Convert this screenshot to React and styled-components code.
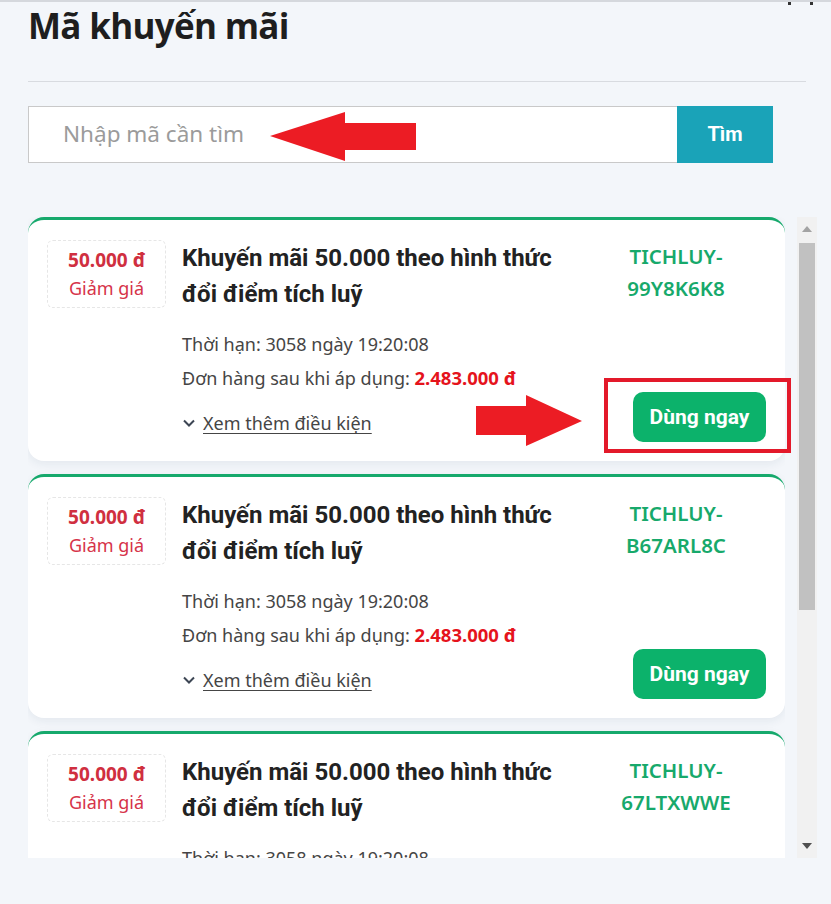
import React from "react";
import styled, { createGlobalStyle } from "styled-components";

const GlobalStyle = createGlobalStyle`
  html, body {
    margin: 0;
    padding: 0;
    background: #f3f6fa;
    font-family: "Noto Sans", "Open Sans", sans-serif;
  }
`;

const Page = styled.div`
  position: relative;
  width: 831px;
  height: 904px;
  overflow: hidden;
  background: #f3f6fa;
  border-top: 2px solid #d5d8dd;
  box-sizing: border-box;
  padding: 0 14px 0 28px;
`;

const TopMarks = styled.div`
  position: absolute;
  top: 0;
  right: 18px;
  display: flex;
  gap: 19px;
`;

const Mark = styled.span`
  width: 3px;
  height: 3px;
  background: #333;
`;

const Title = styled.h1`
  margin: 0;
  padding-top: 1px;
  font-family: "Open Sans", "Noto Sans", sans-serif;
  font-weight: 700;
  font-size: 35px;
  line-height: 46px;
  color: #1e1e1e;
  letter-spacing: -0.7px;
`;

const Divider = styled.hr`
  width: 778px;
  margin: 32px 0 0;
  border: 0;
  border-top: 1px solid #d8dbe0;
`;

const SearchRow = styled.div`
  display: flex;
  margin-top: 24px;
  width: 745px;
  height: 57px;
`;

const SearchInput = styled.input`
  flex: 1;
  box-sizing: border-box;
  border: 1px solid #c9c9c9;
  border-right: 0;
  background: #fff;
  padding: 0 0 2px 34px;
  font-family: "Noto Sans", sans-serif;
  font-size: 22.5px;
  outline: none;
  &::placeholder {
    color: #9b9b9b;
  }
`;

const SearchButton = styled.button`
  width: 96px;
  border: 0;
  background: #1aa3b8;
  color: #fff;
  font-family: "Roboto", sans-serif;
  font-weight: 700;
  font-size: 20px;
  padding-bottom: 2px;
`;

const ListArea = styled.div`
  display: flex;
  gap: 12px;
  margin-top: 54px;
  height: 641px;
`;

const List = styled.div`
  flex: none;
  width: 757px;
  display: flex;
  flex-direction: column;
  gap: 13px;
  overflow: hidden;
`;

const Card = styled.div`
  flex: none;
  display: grid;
  grid-template-columns: 119px 1fr 176px;
  column-gap: 16px;
  box-sizing: border-box;
  height: 244px;
  padding: 20px 19px 19px 19px;
  background: #fff;
  border-top: 3px solid #16a96c;
  border-radius: 16px;
  box-shadow: 0 3px 10px rgba(30, 50, 80, 0.07);
`;

const DiscountBox = styled.div`
  align-self: start;
  height: 68px;
  box-sizing: border-box;
  border: 1px dashed #e6e6e6;
  border-radius: 6px;
  display: flex;
  flex-direction: column;
  align-items: center;
  justify-content: center;
  color: #d6334a;
  font-size: 18px;
  line-height: 28px;
`;

const DiscountValue = styled.b`
  font-weight: 700;
  font-size: 19px;
  color: #d02f40;
`;

const Main = styled.div`
  display: flex;
  flex-direction: column;
`;

const OfferTitle = styled.div`
  font-family: "Roboto", sans-serif;
  font-weight: 700;
  font-size: 24px;
  line-height: 36px;
  color: #222;
  margin-bottom: 16px;
`;

const InfoLine = styled.div`
  font-size: 18px;
  line-height: 33px;
  color: #454545;
`;

const Price = styled.b`
  color: #e5131c;
  font-weight: 700;
  font-size: 18.5px;
`;

const MoreLink = styled.a`
  display: flex;
  align-items: center;
  gap: 7px;
  margin-top: 13px;
  font-size: 18px;
  line-height: 30px;
  color: #454545;
  span {
    text-decoration: underline;
    text-underline-offset: 3px;
  }
`;

const Side = styled.div`
  display: flex;
  flex-direction: column;
  align-items: flex-end;
  justify-content: space-between;
`;

const Code = styled.div`
  align-self: stretch;
  text-align: center;
  padding-right: 4px;
  font-weight: 600;
  font-size: 20.5px;
  line-height: 32px;
  color: #17a96b;
`;

const UseButton = styled.button`
  width: 133px;
  height: 50px;
  border: 0;
  border-radius: 10px;
  background: #0cb26b;
  color: #fff;
  font-family: "Roboto", sans-serif;
  font-weight: 700;
  font-size: 21px;
  padding-bottom: 2px;
`;

const Highlight = styled.div`
  position: absolute;
  left: 604px;
  top: 376px;
  width: 187px;
  height: 75px;
  box-sizing: border-box;
  border: 4px solid #e3192a;
`;

const Arrow = styled.svg`
  position: absolute;
  left: ${(p) => p.x}px;
  top: ${(p) => p.y}px;
`;

const Scrollbar = styled.div`
  width: 20px;
  display: flex;
  flex-direction: column;
  background: #f1f1f1;
`;

const ScrollArrow = styled.div`
  height: 24px;
  display: flex;
  align-items: center;
  justify-content: center;
  color: ${(p) => (p.dim ? "#a3a3a3" : "#505050")};
`;

const Thumb = styled.div`
  margin: 2px 2px 0;
  height: 367px;
  background: #c1c1c1;
`;

const Spacer = styled.div`
  flex: 1;
`;

const offers = [
  { code: "99Y8K6K8" },
  { code: "B67ARL8C" },
  { code: "67LTXWWE" },
];

const OfferCard = ({ code }) => (
  <Card>
    <DiscountBox>
      <DiscountValue>50.000 đ</DiscountValue>
      <span>Giảm giá</span>
    </DiscountBox>
    <Main>
      <OfferTitle>
        Khuyến mãi 50.000 theo hình thức
        <br />
        đổi điểm tích luỹ
      </OfferTitle>
      <InfoLine>Thời hạn: 3058 ngày 19:20:08</InfoLine>
      <InfoLine>
        Đơn hàng sau khi áp dụng: <Price>2.483.000 đ</Price>
      </InfoLine>
      <MoreLink>
        <svg width="14" height="14" viewBox="0 0 14 14">
          <path d="M2 4.5 L7 9.5 L12 4.5" fill="none" stroke="#3d4654" strokeWidth="2" />
        </svg>
        <span>Xem thêm điều kiện</span>
      </MoreLink>
    </Main>
    <Side>
      <Code>
        TICHLUY-
        <br />
        {code}
      </Code>
      <UseButton>Dùng ngay</UseButton>
    </Side>
  </Card>
);

const App = () => {
  return (
    <>
      <GlobalStyle />
      <Page>
        <TopMarks>
          <Mark />
          <Mark />
        </TopMarks>
        <Title>Mã khuyến mãi</Title>
        <Divider />
        <SearchRow>
          <SearchInput placeholder="Nhập mã cần tìm" />
          <SearchButton>Tìm</SearchButton>
        </SearchRow>
        <ListArea>
          <List>
            {offers.map((o) => (
              <OfferCard key={o.code} code={o.code} />
            ))}
          </List>
          <Scrollbar>
            <ScrollArrow dim>
              <svg width="10" height="6" viewBox="0 0 10 6">
                <polygon points="0,6 5,0 10,6" fill="currentColor" />
              </svg>
            </ScrollArrow>
            <Thumb />
            <Spacer />
            <ScrollArrow>
              <svg width="10" height="6" viewBox="0 0 10 6">
                <polygon points="0,0 10,0 5,6" fill="currentColor" />
              </svg>
            </ScrollArrow>
          </Scrollbar>
        </ListArea>
        <Arrow x={268} y={106} width="150" height="56" viewBox="0 0 150 56">
          <polygon points="2,28 77,4 77,15 148,15 148,42 77,42 77,53" fill="#ec1c24" />
        </Arrow>
        <Arrow x={474} y={391} width="110" height="56" viewBox="0 0 110 56">
          <polygon points="2,13 52,13 52,2 108,28 52,53 52,42 2,42" fill="#ec1c24" />
        </Arrow>
        <Highlight />
      </Page>
    </>
  );
};

export default App;
